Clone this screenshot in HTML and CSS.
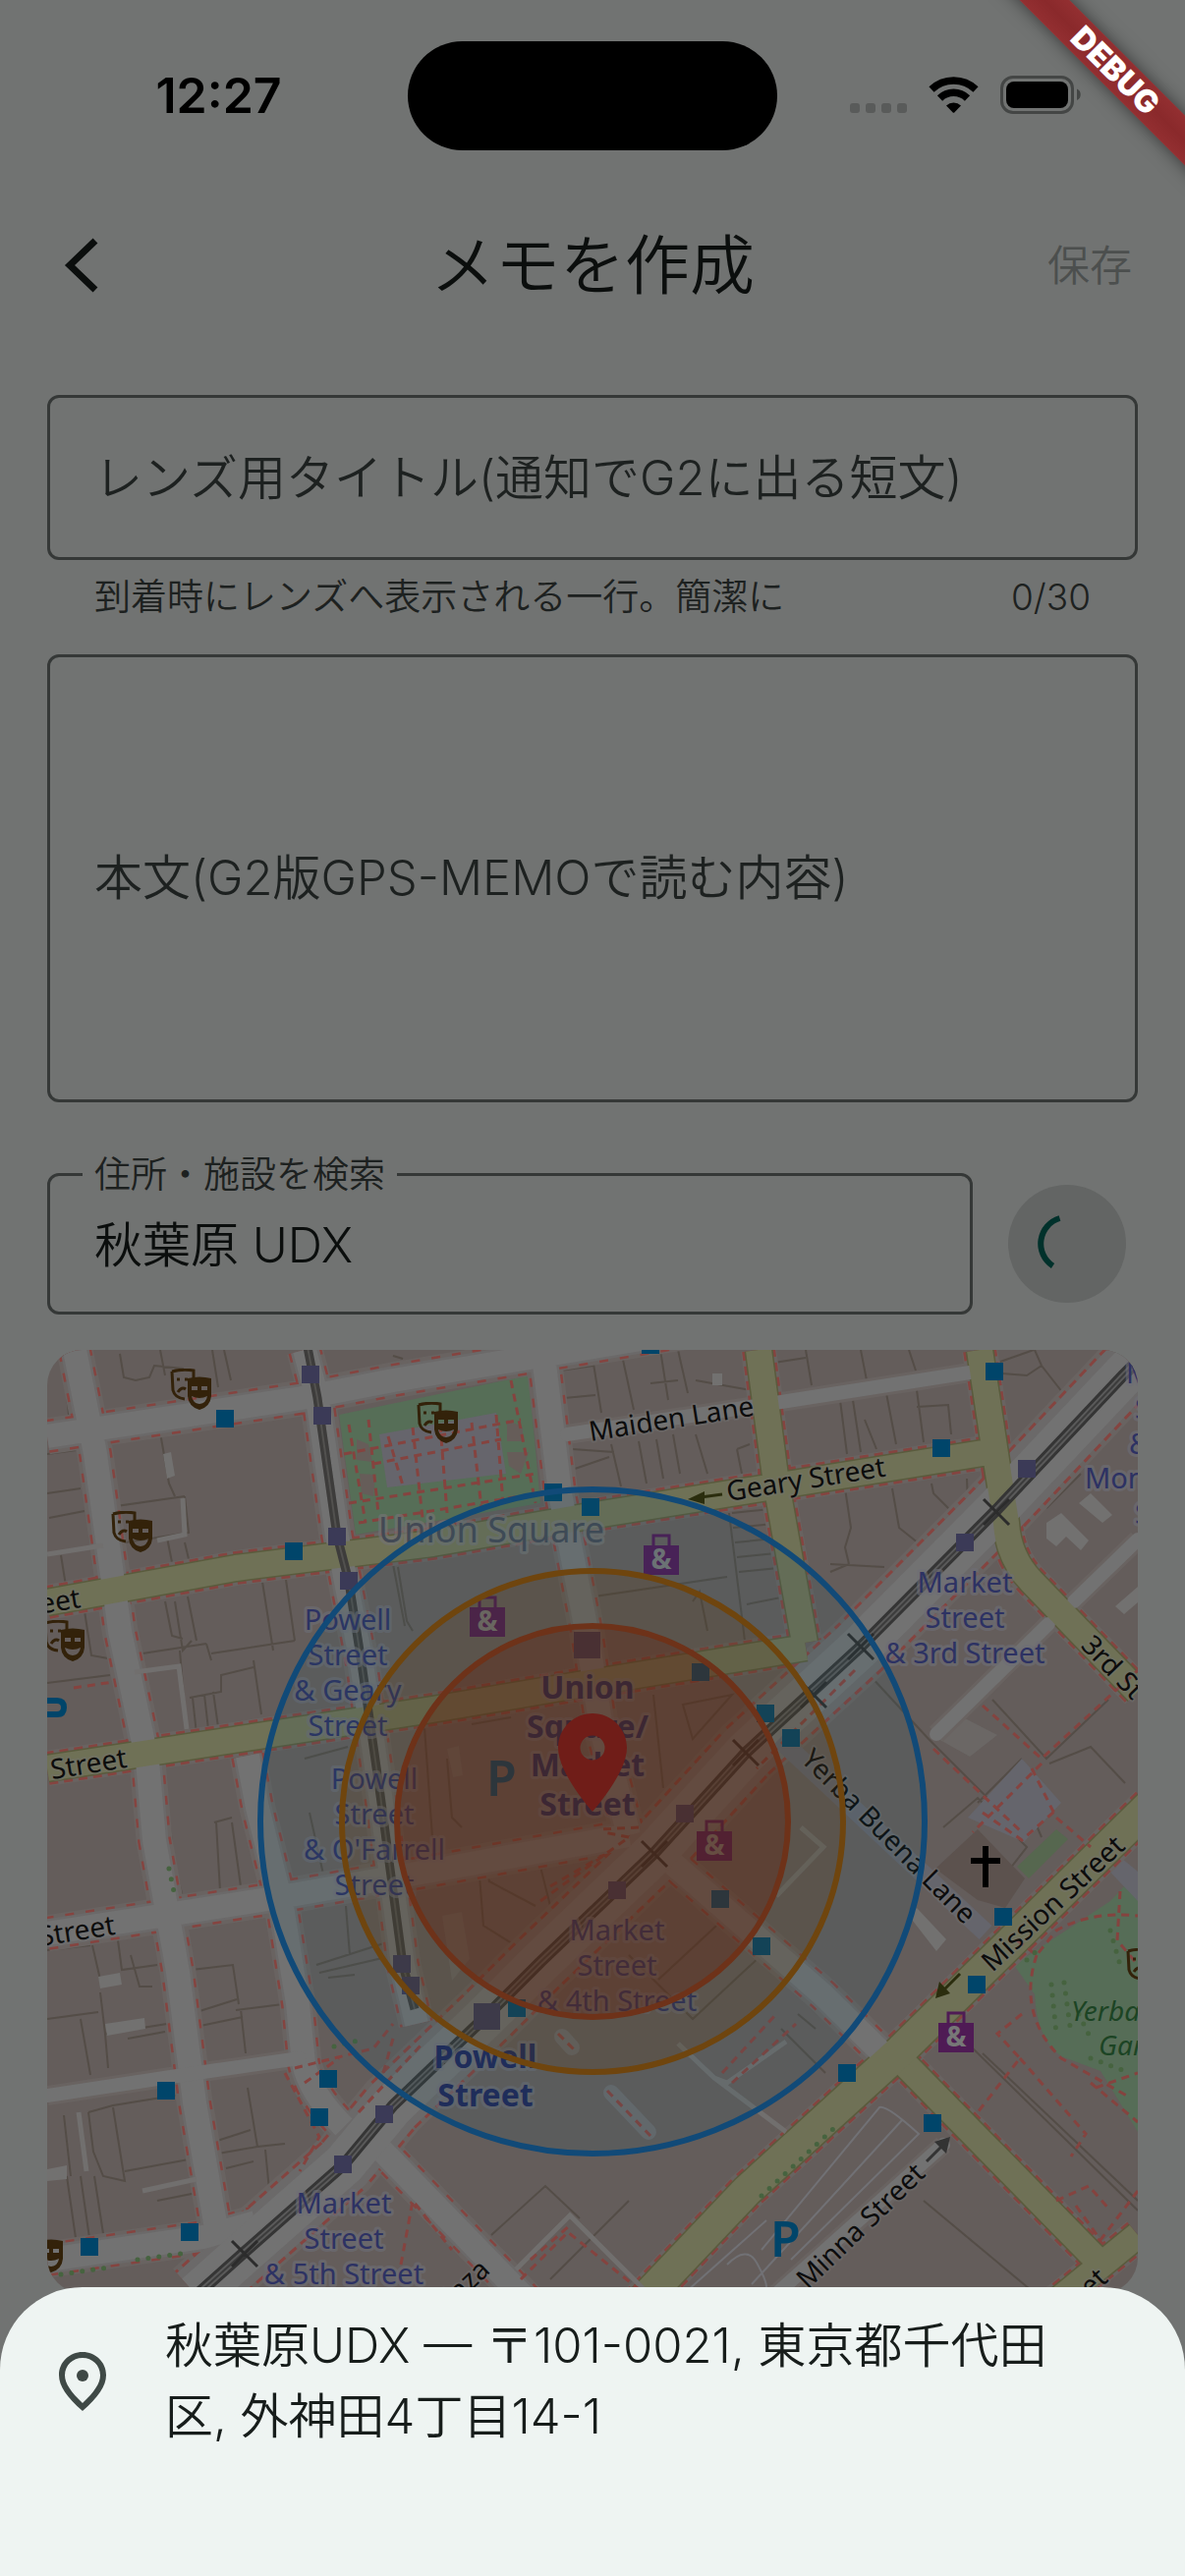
FILE: index.html
```html
<!DOCTYPE html>
<html lang="ja">
<head>
    <meta charset="UTF-8">
    <meta name="viewport" content="width=device-width, initial-scale=1.0">
    <title>メモを作成</title>
    <link rel="stylesheet" href="styles.css">
</head>
<body>

<div class="status-bar">
    <span class="clock">12:27</span>
    <span class="island"></span>
    <span class="status-icons">
        <svg class="status-svg" viewBox="865 74 240 48" aria-hidden="true">
            <g fill="#595b5a">
                <rect x="865" y="106" width="10" height="10" rx="3"/>
                <rect x="881" y="106" width="10" height="10" rx="3"/>
                <rect x="897" y="106" width="10" height="10" rx="3"/>
                <rect x="913" y="106" width="10" height="10" rx="3"/>
            </g>
            <g fill="none" stroke="#000" stroke-width="7.5">
                <path d="M948 92a32.500 32.500 0 0 1 45 0"/>
                <path d="M956.500 101a20 20 0 0 1 28 0"/>
            </g>
            <path d="M963 108.500a11 11 0 0 1 15 0l-6.500 6.800q-1 1-2 0z"/>
            <rect x="1019.500" y="79.500" width="72" height="36" rx="11.500" fill="none" stroke="#444645" stroke-width="3"/>
            <rect x="1024" y="84" width="63" height="27" rx="8"/>
            <path d="M1096 91.500c5 2 5 9.500 0 11.500z" fill="#444645"/>
        </svg>
    </span>
</div>

<header class="app-bar">
    <button class="back" type="button" aria-label="戻る">
        <svg width="72" height="72" viewBox="0 0 72 72" aria-hidden="true">
            <path d="M49 11L23 36l26 25" fill="none" stroke="#0b0e0d" stroke-width="7"/>
        </svg>
    </button>
    <h1>メモを作成</h1>
    <button class="save" type="button" disabled>保存</button>
</header>

<main>
    <input class="field title-field" type="text" maxlength="30" aria-label="レンズ用タイトル" placeholder="レンズ用タイトル(通知でG2に出る短文)">
    <div class="helper">
        <span>到着時にレンズへ表示される一行。簡潔に</span>
        <span>0/30</span>
    </div>

    <textarea class="field body-field" rows="1" aria-label="本文" placeholder="本文(G2版GPS-MEMOで読む内容)"></textarea>

    <div class="search-row">
        <div class="search-box">
            <label for="place">住所・施設を検索</label>
            <input class="field search-field" type="text" id="place" value="秋葉原 UDX">
        </div>
        <button class="search-button" type="button" aria-label="検索中">
            <svg width="72" height="72" viewBox="0 0 72 72" aria-hidden="true">
                <path d="M28.500 10A27 27 0 0 0 21.500 58.500" fill="none" stroke="#00312b" stroke-width="6"/>
            </svg>
        </button>
    </div>

    <svg class="map" viewBox="48 1374 1110 960" preserveAspectRatio="xMidYMin slice" role="img" aria-label="地図">
        <defs>
            <path id="streets" d="M48 1462L307 1423 400 1405 700 1355M553 1380L570 1520 597 1660 612 1760 640 1868M76 1374L97 1480 122 1660 150 1793 157 1873 181 2007 198 2140 222 2280M48 1968L273 1933 440 1904 640 1868M252 1787L262 1840 287 1940 303 2040 309 2100Q315 2130 350 2165M310 1374L323 1423 343 1563 368 1693 387 1827 410 2000 424 2060M48 2300L207 2277 260 2262M385 2185L540 2345M677 1890L837 2030 900 2092"/>
            <path id="lanes" d="M48 2133L200 2110 305 2095M577 1460L763 1432 987 1397M953 1765L1067 1653M1093 1630L1158 1567M790 2335L960 2183"/>
            <path id="avenues" d="M48 1631L240 1596 440 1571 600 1543 1000 1479M48 1800L440 1740 600 1713 820 1677M772 1374L790 1510 819 1672M997 1374L1015 1493 1024 1550Q1026 1585 1050 1610L1158 1722M917 2097L1123 2307M1158 2275L1060 2355"/>
            <path id="mission" d="M1170 1838L917 2087 760 2230 650 2346"/>
            <path id="market" d="M1170 1373L1143 1400 1013 1538 875 1677 760 1783 665 1887 550 1997 495 2052 400 2143 350 2203 248 2293 200 2336"/>
            <path id="cable" d="M312 1366L323 1423 343 1563 355 1610 368 1693 387 1827 410 2000 422 2045"/>
            <symbol id="masks" viewBox="0 0 42 42">
                <path d="M2 3q11-3 22-1v9M2 3l1 19q2 8 12 9M7 11h3M15 11h3M8 24q4-6 8-3" fill="none" stroke="#33220a" stroke-width="3"/>
                <path fill="#33220a" fill-rule="evenodd" d="M18 10q12-3 24 0v18q-1 11-12 14-11-3-12-14zM22 18v4h6v-4zM32 18v4h6v-4zM22 28q8 4 16 0-1 7-8 8-7-1-8-8z"/>
            </symbol>
            <symbol id="bag" viewBox="0 0 36 42">
                <path d="M10 13V2h16v11" fill="none" stroke="#4f1b55" stroke-width="3"/>
                <path d="M0 12h36v30H0z" fill="#4f1b55"/>
                <text class="bag-text" x="18" y="36" text-anchor="middle">&amp;</text>
            </symbol>
        </defs>

        <rect x="48" y="1374" width="1110" height="960" fill="#645d5b"/>

        <!-- building outlines -->
        <path class="walls" d="M122 1378L126 1402 138 1405 152 1402 157 1390 187 1393M163 1374L168 1400M216 1374L222 1412M228 1374L235 1405M64 1376L70 1440M111 1468L116 1520 118 1533 188 1523M163 1458L172 1510 178 1523M48 1520L82 1515M50 1545L86 1538M48 1480L78 1476M84 1470L92 1570M118 1533L128 1600M188 1523L192 1560 128 1570M170 1565L175 1590M62 1583L68 1620M188 1570L197 1608M168 1630L175 1665 186 1668M178 1630L186 1680 195 1670M191 1625L200 1670M145 1683L210 1673M183 1680L188 1740M210 1673L215 1690M267 1610L278 1680M291 1608L300 1670M215 1683L300 1670M48 1713L112 1705M86 1640L93 1685 110 1688M193 1728L225 1722 225 1705 258 1697M196 1728L200 1765M208 1725L212 1760M217 1722L222 1758M258 1690L266 1745M405 1595L414 1650 420 1660M400 1380L410 1383M135 1790L142 1840M165 1795L178 1900 187 1935M218 1855L236 1850M220 1855L224 1925M236 1855L245 1920M48 1985L92 1980M94 1980L102 2015 120 2010M120 1975L124 2005 160 2000M133 1990L142 2022 155 2022M102 2028L107 2070 170 2060M48 2055L100 2048M82 2055L92 2112M107 2070L110 2105M130 2075L168 2068M195 2005L237 2000 243 2040M200 2048L241 2035M204 2062L247 2053M245 2045L250 2090M240 2046L288 2040M90 2150L95 2190 105 2215 127 2220 115 2145M90 2150L115 2143 183 2132M127 2210L192 2198M65 2153L72 2215M68 2215L78 2285M82 2215L92 2285M96 2215L106 2280M252 2125L262 2185 222 2192M262 2185L290 2182M218 2180L255 2168M270 2188L275 2240M230 2207L258 2200M160 2240L200 2232M315 1845L330 1912M278 1780L310 1775M310 1790L354 1778M322 2000L400 1975M325 2008L402 1990M352 1940L356 1990M334 2013L361 2010M570 1395L604 1390M604 1388L612 1438M574 1423L606 1420M634 1384L645 1435M672 1374L680 1425M690 1374L700 1418M708 1405L764 1415M662 1408L690 1405M585 1495L620 1483M582 1475L625 1478M622 1470L632 1513M650 1467L658 1510M668 1465L675 1505M685 1460L692 1500M708 1460L720 1500M750 1475L763 1470M750 1475L755 1500M745 1540L795 1535M746 1555L798 1550M748 1570L798 1565M750 1585L800 1580M752 1600L802 1595M760 1633L810 1623M742 1540L758 1670M605 1625L740 1605M705 1630L712 1620 720 1660M400 1592L412 1655M788 1387L820 1382M820 1374L826 1410M876 1374L882 1405M925 1374L932 1395M795 1430L855 1425 862 1480M868 1425L876 1478M880 1445L892 1475M902 1418L912 1470M933 1415L940 1468M933 1432L965 1430 968 1460M860 1515L866 1555 860 1575 864 1592M864 1592L845 1600M908 1515L915 1555 940 1575M948 1510L950 1520 970 1540M984 1505L985 1530M1018 1386L1052 1374M1053 1374L1060 1390 1085 1422M1020 1398L1045 1400 1060 1390M1045 1455L1080 1500 1110 1480M1065 1535L1100 1500M900 1595L845 1592M918 1600L950 1650M885 1705L945 1770 1005 1830M1010 1730L1065 1790 1128 1730M1068 1795L1110 1778 1145 1815M995 1835L1040 1790M455 1790L460 1850 470 1860M430 1730L440 1870M490 1880L498 1915 545 1940M488 1910L492 1960 540 1990M550 1900L560 1940M695 1735L745 1725 705 1770zM665 1725L675 1820M480 1755L520 1748M670 2015L740 1950 775 1990 705 2055 640 1990M812 2050L830 2065M795 2065L840 2110M500 2275L555 2225 590 2258M985 2080L1158 2250M1000 2090L1158 2240M1045 1835L1060 1870M960 1860L995 1830 1045 1880 1010 1925M560 2320L640 2240M1010 2210L1068 2260M940 2240L1060 2340"/>

        <!-- courtyards and other open spots -->
        <g fill="#727170">
            <path d="M166 1480l8-2 4 24-8 3zM100 2012l22-4 2 12-22 4zM107 2060l40-6 1 11-39 7zM1110 1520l22 22-10 8-24-20zM1065 1550l15-10 28 28-8 10-15-14-10 10-10-8zM1135 1635l23-20v16l-14 12zM925 1950l8-8 30 32-10 12zM48 2208l20-4v14l-20 2zM725 1398h10v12h-10z"/>
            <path d="M450 1950l20-4 8 48-18 22zM955 1770l25-22 35 18-28 22zM455 1780l12-3 4 30-10 2z" opacity=".5"/>
        </g>

        <!-- parks -->
        <path fill="#56674f" d="M1035 1900l40-38 12 10-40 40z"/>
        <path fill="#566d57" d="M1158 1905L1130 1935 1032 2000 1053 2030Q1055 2075 1080 2093L1120 2108 1158 2170z"/>
        <path fill="#566e57" d="M345 1440L538 1400 550 1530 362 1562z"/>
        <path fill="#66656c" d="M386 1460L505 1438 515 1500 394 1514z"/>
        <path fill="#665d59" d="M363 1465l12 5 4 18-16-2zM366 1500l16 1-2 22-12-3zM516 1445l16 8v14h-16zM516 1478h22l-8 22-12-8z"/>
        <path fill="#65656c" d="M985 1850L1040 1790 1080 1835 1042 1875zM1120 1895L1158 1935V1905L1130 1882z"/>
        <path fill="#5c524e" d="M952 1902l43-40 48 50-20 30-28-8z"/>

        <!-- road edges, footpath dashes, then surfaces -->
        <g fill="none">
            <g stroke="#696361">
                <use href="#streets" stroke-width="37"/><use href="#lanes" stroke-width="20"/>
                <use href="#avenues" stroke-width="36"/><use href="#mission" stroke-width="42"/><use href="#market" stroke-width="72"/>
            </g>
            <g stroke="#854440" stroke-dasharray="9 6">
                <use href="#streets" stroke-width="34" stroke-dasharray="9 12"/>
                <use href="#avenues" stroke-width="34"/><use href="#mission" stroke-width="40"/><use href="#market" stroke-width="66"/>
            </g>
            <g stroke="#6b6969"><use href="#streets" stroke-width="29"/><use href="#market" stroke-width="60"/></g>
            <g stroke="#5a5b3d"><use href="#avenues" stroke-width="29"/><use href="#mission" stroke-width="35"/></g>
            <g stroke="#727272">
                <use href="#streets" stroke-width="24"/><use href="#lanes" stroke-width="14" stroke-linecap="round"/>
                <use href="#market" stroke-width="44"/>
            </g>
            <path d="M793 1770L1003 1967" stroke="#65656c" stroke-width="19"/>
            <use href="#avenues" stroke="#6f7156" stroke-width="26" stroke-linejoin="round"/>
            <use href="#mission" stroke="#6f7156" stroke-width="32"/>
        </g>

        <!-- alleys -->
        <path fill="none" stroke="#716f6e" stroke-width="5" d="M48 1582L105 1573M137 1702L182 1696 190 1760M160 1568L188 1562 186 1525M800 2078L740 2120 727 2115 690 2080M727 2115L800 2170M525 2310L580 2255 660 2335M815 1860L838 1880 790 1930M145 2230L200 2218M80 2150L88 2210"/>
        <path fill="none" stroke="#717175" stroke-width="2" d="M775 2290L895 2145Q902 2142 935 2172L805 2300M765 2325L918 2158M690 2340L780 2260M740 2305q20-20 30-2t10 25"/>

        <!-- footpaths -->
        <path class="paths" d="M355 1450L372 1550M375 1445L385 1540M350 1480L530 1445M395 1462L410 1512M420 1453L430 1545M448 1450L455 1540M480 1448L490 1535M505 1440L512 1530M355 1530L545 1500M365 1550L548 1520M520 1405L545 1530M380 1490L510 1465M75 1718L115 1712M1000 1736L1060 1790 1158 1700M1050 1800L1075 1850 1110 1880M1060 1795L990 1865M1000 1845L1040 1873 1075 1842M1035 1975L1055 1990 1075 1965Q1110 1945 1158 1950M1055 1990Q1035 2050 1080 2095L1150 2135M1140 1925L1137 1975 1158 2000M1040 2050L1015 2070 1038 2095 995 2150M1038 2095L1105 2172 1090 2195M1110 2120L1158 2160M1115 2125L1158 2110M870 1700L770 1800M950 1780L1040 1865M550 1935L640 1870M560 1920L620 1885M745 2120L810 2060M735 2110L790 2050M300 2105L380 2085 400 2060M310 2120L345 2095M365 2150L430 2080M400 2075L390 2110M290 2110L325 2175 305 2210M1095 2245L1120 2280 1158 2230M1075 2240L1108 2225 1130 2250M530 2320L578 2272 650 2330M540 2300L580 2265M640 1870L615 1865M650 1860L610 1862M408 2305L420 2240 460 2290"/>
        <path fill="none" stroke="#6c6b6d" stroke-width="16" stroke-linecap="round" d="M622 2130L660 2170M572 2073L582 2084"/>
        <path class="paths" stroke-width="9" d="M618 2128L662 2174M568 2070L586 2088"/>

        <!-- trees -->
        <g fill="none" stroke="#46633f" stroke-width="5" stroke-linecap="round" stroke-dasharray="0 11">
            <path d="M172 1902L178 1930M340 2083L372 2075M62 2315L110 2308M140 2300L190 2293M1070 2020L1075 2070M1083 2018L1090 2070M1098 2050L1110 2075M1110 2095L1150 2110M1045 1995L1058 1983M775 2235L850 2165M1130 1965L1140 2000"/>
        </g>

        <!-- tram and cable car tracks -->
        <g fill="none">
            <use href="#market" stroke="#353535" stroke-width="12"/>
            <use href="#market" stroke="#5a5a5a" stroke-width="6"/>
            <use href="#market" stroke="#3c3c3c" stroke-width="2"/>
            <use href="#cable" stroke="#3d3c3b" stroke-width="9"/>
            <use href="#cable" stroke="#52514f" stroke-width="2"/>
            <path stroke="#2c2c2c" stroke-width="3" d="M1001 1526l26 26m0-26l-26 26M863 1663l26 26m0-26l-26 26M815 1712l26 26m0-26l-26 26M746 1771l26 26m0-26l-26 26M653 1874l26 26m0-26l-26 26M236 2281l26 26m0-26l-26 26"/>
        </g>

        <!-- stops -->
        <path fill="#3b3a57" d="M307 1390h18v18h-18zM319 1432h18v18h-18zM334 1555h18v18h-18zM346 1600h18v18h-18zM1036 1486h18v18h-18zM973 1561h18v18h-18zM688 1837h18v18h-18zM619 1915h18v18h-18zM400 1990h18v18h-18zM409 2012h18v18h-18zM382 2143h18v18h-18zM340 2194h18v18h-18zM584 1661h27v27h-27zM482 2039h27v27h-27z"/>
        <path fill="#00456a" d="M220 1435h18v18h-18zM290 1570h18v18h-18zM653 1360h18v18h-18zM554 1510h18v18h-18zM592 1525h18v18h-18zM704 1693h18v18h-18zM770 1735h18v18h-18zM796 1760h18v18h-18zM949 1465h18v18h-18zM1003 1387h18v18h-18zM160 2119h18v18h-18zM325 2107h18v18h-18zM316 2146h18v18h-18zM184 2263h18v18h-18zM82 2278h18v18h-18zM517 2035h18v18h-18zM724 1924h18v18h-18zM766 1972h18v18h-18zM1012 1942h18v18h-18zM985 2011h18v18h-18zM853 2101h18v18h-18zM940 2152h18v18h-18z"/>

        <!-- points of interest -->
        <use href="#masks" x="173" y="1393" width="42" height="42"/>
        <use href="#masks" x="113" y="1538" width="42" height="42"/>
        <use href="#masks" x="44" y="1649" width="42" height="42"/>
        <use href="#masks" x="424" y="1427" width="42" height="42"/>
        <use href="#masks" x="1146" y="1983" width="42" height="42"/>
        <use href="#masks" x="22" y="2271" width="42" height="42"/>
        <use href="#bag" x="655" y="1561" width="36" height="42"/>
        <use href="#bag" x="478" y="1624" width="36" height="42"/>
        <use href="#bag" x="709" y="1852" width="36" height="42"/>
        <use href="#bag" x="955" y="2047" width="36" height="42"/>
        <path d="M1003 1879v42M988 1894h30" stroke="#000" stroke-width="6"/>
        <path d="M48 1731h10q7 0 7 7t-7 7H48" fill="none" stroke="#00456a" stroke-width="6"/>
        <g stroke-width="3">
            <path d="M735 1521l-22 3" stroke="#2b2d0e"/><path d="M700 1526l17-8v13z" fill="#2b2d0e"/>
            <path d="M977 2009l-16 16" stroke="#2b2d0e"/><path d="M952 2034l4-17 11 12z" fill="#2b2d0e"/>
            <path d="M943 2200l16-16" stroke="#333"/><path d="M967 2175l-4 17-12-12z" fill="#333"/>
        </g>

        <!-- names -->
        <g class="stop" text-anchor="middle">
            <text><tspan x="354" y="1659">Powell</tspan><tspan x="354" y="1695">Street</tspan><tspan x="354" y="1731">&amp; Geary</tspan><tspan x="354" y="1767">Street</tspan></text>
            <text><tspan x="381" y="1821">Powell</tspan><tspan x="381" y="1857">Street</tspan><tspan x="381" y="1893">&amp; O'Farrell</tspan><tspan x="381" y="1929">Street</tspan></text>
            <text><tspan x="982" y="1621">Market</tspan><tspan x="982" y="1657">Street</tspan><tspan x="982" y="1693">&amp; 3rd Street</tspan></text>
            <text><tspan x="628" y="1975">Market</tspan><tspan x="628" y="2011">Street</tspan><tspan x="628" y="2047">&amp; 4th Street</tspan></text>
            <text><tspan x="350" y="2253">Market</tspan><tspan x="350" y="2289">Street</tspan><tspan x="350" y="2325">&amp; 5th Street</tspan></text>
        </g>
        <g class="stop">
            <text><tspan x="1146" y="1408">M</tspan><tspan x="1155" y="1444">S</tspan><tspan x="1149" y="1480">&amp;</tspan><tspan x="1104" y="1515">Mont</tspan><tspan x="1155" y="1551">S</tspan></text>
        </g>
        <g class="station" text-anchor="middle">
            <text><tspan x="598" y="1729">Union</tspan><tspan x="598" y="1769">Square/</tspan><tspan x="598" y="1808">Market</tspan><tspan x="598" y="1848">Street</tspan></text>
            <text><tspan x="494" y="2105">Powell</tspan><tspan x="494" y="2144">Street</tspan></text>
        </g>
        <text class="square" x="500" y="1570" text-anchor="middle">Union Square</text>
        <g class="street">
            <text transform="translate(601 1467) rotate(-9)">Maiden Lane</text>
            <text transform="translate(741 1528) rotate(-9)">Geary Street</text>
            <text transform="translate(83 1636) rotate(-9)" text-anchor="end">Street</text>
            <text transform="translate(53 1811) rotate(-9)">Street</text>
            <text transform="translate(41 1981) rotate(-9)">Street</text>
            <text transform="translate(1010 2008) rotate(-43)">Mission Street</text>
            <text transform="translate(822 2331) rotate(-44)">Minna Street</text>
            <text transform="translate(814 1792) rotate(45)">Yerba Buena Lane</text>
            <text transform="translate(1099 1676) rotate(46)">3rd St</text>
            <text transform="translate(500 2312) rotate(-44)" text-anchor="end">Plaza</text>
            <text transform="translate(1129 2321) rotate(-43)" text-anchor="end">Street</text>
        </g>
        <g class="garden">
            <text x="1090" y="2057">Yerba</text>
            <text x="1118" y="2092">Gard</text>
        </g>
        <g class="parking">
            <text x="495" y="1828">P</text>
            <text x="784" y="2297">P</text>
        </g>

        <!-- notification radii -->
        <g stroke-width="6">
            <circle cx="603" cy="1854" r="338" fill="rgba(33,85,99,.13)" stroke="#114a78"/>
            <circle cx="603" cy="1854" r="255" fill="rgba(92,45,0,.17)" stroke="#6f450e"/>
            <circle cx="603" cy="1854" r="199" fill="rgba(97,30,8,.34)" stroke="#6e3219"/>
        </g>
        <path transform="translate(543 1734) scale(5)" fill="#701d18" fill-rule="evenodd" d="M12 2C8.130 2 5 5.130 5 9c0 5.250 7 13 7 13s7-7.750 7-13c0-3.870-3.130-7-7-7zm0 9.500a2.500 2.500 0 1 1 0-5 2.500 2.500 0 0 1 0 5z"/>
    </svg>
</main>

<section class="sheet">
    <button class="result" type="button">
        <svg class="result-icon" width="72" height="72" viewBox="0 0 24 24" aria-hidden="true">
            <path fill="#3f4946" fill-rule="evenodd" d="M12 2C7.600 2 4 5.400 4 9.800c0 3.700 2.700 7.500 8 12.200 5.300-4.700 8-8.500 8-12.200C20 5.400 16.400 2 12 2zm0 17.300c-4-3.700-6-6.800-6-9.400C6 6.500 8.700 4 12 4s6 2.500 6 5.900c0 2.600-2 5.700-6 9.400z"/>
            <circle cx="12" cy="10" r="2" fill="#3f4946"/>
        </svg>
        <span>秋葉原UDX — 〒101-0021, 東京都千代田区, 外神田4丁目14-1</span>
    </button>
</section>

<div class="debug-corner"><span class="debug-banner">DEBUG</span></div>

</body>
</html>
```

FILE: styles.css
```css
* {
    box-sizing: border-box;
}

body {
    margin: 0;
    height: 100vh;
    overflow: hidden;
    position: relative;
    background: #717372;
    color: #171d1b;
    font-family: Inter, "Noto Sans CJK JP", sans-serif;
    font-weight: 350;
}

button {
    font: inherit;
    color: inherit;
    background: none;
    border: 0;
    padding: 0;
}

/* status bar */
.status-bar {
    display: grid;
    grid-template-columns: 1fr 376px 1fr;
    align-items: center;
    height: 186px;
    padding: 8px 0 0;
}

.clock {
    color: #000;
    font-size: 50px;
    font-weight: 600;
    justify-self: center;
    padding-left: 30px;
}

.island {
    height: 111px;
    border-radius: 56px;
    background: #000;
}

.status-icons {
    display: flex;
    padding-left: 74px;
}

.status-svg {
    width: 240px;
    height: 48px;
}

/* app bar */
.app-bar {
    display: grid;
    grid-template-columns: 200px 1fr 200px;
    align-items: center;
    height: 168px;
    padding: 0 48px;
}

.app-bar h1 {
    margin: 0;
    color: #0b0e0d;
    font-size: 66px;
    font-weight: 350;
    line-height: 72px;
    text-align: center;
}

.back {
    display: flex;
    justify-self: start;
}

.save {
    justify-self: end;
    padding-right: 6px;
    font-size: 43px;
    line-height: 48px;
    color: #4c4f4e;
}

/* form */
main {
    padding: 48px;
}

.field {
    display: block;
    width: 100%;
    margin: 0;
    padding: 0 45px;
    border: 3px solid #353837;
    border-radius: 12px;
    outline: 0;
    background: transparent;
    color: #0b0e0d;
    font-family: inherit;
    font-size: 49px;
    font-weight: 350;
    line-height: 66px;
    resize: none;
}

.field::placeholder {
    color: #1d2120;
    opacity: 1;
}

.title-field {
    height: 168px;
}

.body-field {
    padding: 192px 45px;
    height: 456px;
}

.search-field {
    height: 144px;
    padding-bottom: 6px;
}

.helper {
    display: flex;
    justify-content: space-between;
    margin: 14px 0 34px;
    padding: 0 48px;
    color: #1d2120;
    font-size: 37px;
    line-height: 48px;
}

.search-row {
    display: flex;
    align-items: center;
    gap: 36px;
    margin: 72px 0 36px;
    padding-right: 12px;
}

.search-box {
    position: relative;
    flex: 1;
}

.search-box label {
    position: absolute;
    top: -22px;
    left: 36px;
    padding: 0 12px;
    background: #717372;
    color: #1d2120;
    font-size: 37px;
    line-height: 48px;
}

.search-button {
    display: flex;
    align-items: center;
    justify-content: center;
    width: 120px;
    height: 120px;
    border-radius: 50%;
    background: #636564;
}

/* map */
.map {
    display: block;
    width: 100%;
    height: 960px;
    border-radius: 36px;
    font-family: "Noto Sans", sans-serif;
    font-weight: 400;
}

.map text {
    paint-order: stroke;
    stroke-linejoin: round;
}

.walls {
    fill: none;
    stroke: #544d47;
    stroke-width: 2;
}

.paths {
    fill: none;
    stroke: #85433f;
    stroke-width: 3;
    stroke-dasharray: 8 6;
}

.stop {
    font-size: 29px;
    fill: #2d3263;
    stroke: rgba(110, 110, 118, 0.6);
    stroke-width: 6px;
}

.station {
    font-size: 32px;
    font-weight: 700;
    fill: #1f2859;
    stroke: rgba(110, 110, 118, 0.6);
    stroke-width: 6px;
}

.square {
    font-size: 36px;
    fill: #434954;
    stroke: rgba(115, 115, 115, 0.7);
    stroke-width: 6px;
}

.street {
    font-size: 28px;
    fill: #0c0c0c;
    stroke: rgba(115, 115, 115, 0.4);
    stroke-width: 4px;
}

.garden {
    font-size: 28px;
    font-style: italic;
    fill: #1c4424;
}

.parking {
    font-size: 50px;
    font-weight: 600;
    fill: #00456a;
}

.bag-text {
    font-size: 28px;
    font-weight: 700;
    fill: #777;
}

/* result sheet */
.sheet {
    position: absolute;
    left: 0;
    right: 0;
    bottom: 0;
    min-height: 294px;
    padding: 24px 96px 0 48px;
    border-radius: 84px 84px 0 0;
    background: #eef4f2;
}

.result {
    display: flex;
    align-items: center;
    gap: 48px;
    width: 100%;
    color: #171d1b;
    font-size: 49px;
    line-height: 72px;
    text-align: left;
}

.result-icon {
    flex: none;
}

/* corner ribbon */
.debug-corner {
    position: absolute;
    top: 0;
    right: 0;
    width: 240px;
    height: 240px;
    overflow: hidden;
}

.debug-banner {
    position: absolute;
    top: 54px;
    right: -109px;
    width: 360px;
    height: 36px;
    background: linear-gradient(#932f31, #8a292b, #932f31);
    box-shadow: 0 0 18px rgba(0, 0, 0, 0.5);
    color: #fff;
    font-size: 32px;
    font-weight: 900;
    line-height: 36px;
    text-align: center;
    transform: rotate(45deg);
}
```
